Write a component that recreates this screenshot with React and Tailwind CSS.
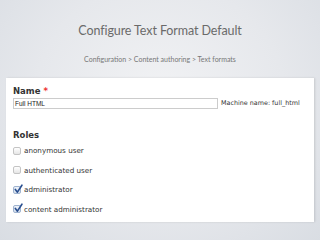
export default function App() {
  const roles = [
    { label: "anonymous user", checked: false },
    { label: "authenticated user", checked: false },
    { label: "administrator", checked: true },
    { label: "content administrator", checked: true },
  ];
  return (
    <div className="w-[320px] h-[240px] overflow-hidden bg-[radial-gradient(ellipse_at_50%_40%,#f1f2f4_0%,#e6e8ec_55%,#d9dde3_100%)] flex flex-col items-center">
      <div className="mt-[22px] h-[18px] text-[12.5px] leading-[18px] text-[#6a6a6a] tracking-[-0.1px]" style={{ fontFamily: "Lato, 'Open Sans', sans-serif" }}>
        Configure Text Format Default
      </div>
      <div className="mt-[14px] h-[10px] text-[7px] leading-[10px] text-[#777]" style={{ fontFamily: "Lato, 'Open Sans', sans-serif" }}>
        Configuration &gt; Content authoring &gt; Text formats
      </div>
      <div className="mt-[14px] w-[308px] h-[144px] bg-white shadow-[1px_0_2px_rgba(0,0,0,0.12)] px-[7px] pt-[8px] text-[#333]" style={{ fontFamily: "'DejaVu Sans', sans-serif" }}>
        <div className="text-[8.5px] leading-[11px] font-bold">
          Name <span className="text-[#e33]">*</span>
        </div>
        <div className="mt-[1px] flex items-center">
          <div className="w-[205px] h-[11px] border border-[#ccc] text-[6.5px] leading-[9px] pl-[1px] text-[#222]" style={{ fontFamily: "'Liberation Sans', sans-serif" }}>
            Full HTML
          </div>
          <div className="ml-[3px] whitespace-nowrap text-[6.4px] leading-[11px] text-[#333]">Machine name: full_html</div>
        </div>
        <div className="mt-[21px] text-[8.5px] leading-[11px] font-bold">Roles</div>
        <div className="mt-[4px] flex flex-col gap-[8.5px]">
          {roles.map((r) => (
            <div key={r.label} className="flex items-center h-[11px]">
              <div className={`w-[8px] h-[8px] rounded-[2px] border relative ${r.checked ? "border-[#9fb3cf] bg-gradient-to-b from-[#eef3fa] to-[#d6e0ee]" : "border-[#c4c4c4] bg-gradient-to-b from-white to-[#e6e6e6]"}`}>
                {r.checked && (
                  <svg viewBox="0 0 10 10" className="absolute left-[0px] top-[-3px] w-[9px] h-[10px]">
                    <path d="M1.5 5.5 L3.8 8.5 L8.8 0.8" fill="none" stroke="#2a4f8f" strokeWidth="1.8" strokeLinecap="round" strokeLinejoin="round" />
                  </svg>
                )}
              </div>
              <span className="ml-[3px] text-[7.2px] leading-[11px] text-[#333]">{r.label}</span>
            </div>
          ))}
        </div>
      </div>
    </div>
  );
}
